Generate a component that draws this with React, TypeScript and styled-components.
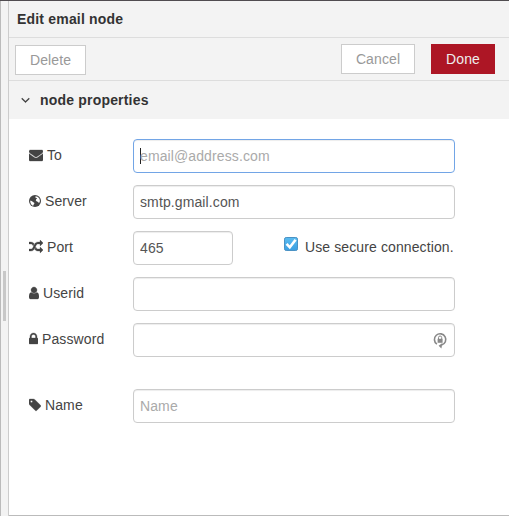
import React from "react";
import styled, { createGlobalStyle } from "styled-components";

const GlobalStyle = createGlobalStyle`
  * { box-sizing: border-box; }
  body {
    margin: 0;
    overflow: hidden;
    background: #fff;
    color: #444;
    font: 14px/20px "Liberation Sans", Arial, Helvetica, sans-serif;
    letter-spacing: 0.11px;
  }
`;

const Tray = styled.div`
  display: grid;
  grid-template-columns: 9px 1fr;
  width: 509px;
  height: 516px;
  border-top: 1px solid #504c50;
`;

const ResizeBar = styled.div`
  display: flex;
  align-items: flex-start;
  padding: 270px 0 0 2px;
  background: #f3f3f3;
  border-left: 1px solid #bbb;
  border-right: 1px solid #ccc;
`;

const Grip = styled.div`
  width: 3px;
  height: 50px;
  background: #c8c8c8;
`;

const Panel = styled.main`
  display: flex;
  flex-direction: column;
  border-bottom: 1px solid #bbb;
`;

const Header = styled.header`
  height: 37px;
  padding: 8px 8px 0;
  background: #f3f3f3;
  border-bottom: 1px solid #ddd;
  color: #333;
  font-weight: bold;
  letter-spacing: 0.19px;
`;

const Toolbar = styled.div`
  display: flex;
  align-items: flex-start;
  height: 43px;
  padding: 6px 14px 0 6px;
  background: #f3f3f3;
  border-bottom: 1px solid #ddd;
`;

const Actions = styled.div`
  display: flex;
  gap: 16px;
  margin-left: auto;
`;

const Button = styled.button<{ $primary?: boolean; $width: number; $drop?: number }>`
  width: ${(p) => p.$width}px;
  height: 30px;
  margin: ${(p) => p.$drop ?? 0}px 0 0;
  padding: 0;
  border: 1px solid ${(p) => (p.$primary ? "#ad1625" : "#ccc")};
  background: ${(p) => (p.$primary ? "#ad1625" : "#fff")};
  color: ${(p) => (p.$primary ? "#eee" : "#999")};
  font: inherit;
  letter-spacing: inherit;
  line-height: 28px;
`;

const SectionHeader = styled.div`
  display: flex;
  align-items: center;
  gap: 10px;
  height: 38px;
  padding-left: 12px;
  background: #f3f3f3;
  color: #333;
  font-weight: bold;
  letter-spacing: 0.19px;
`;

const Form = styled.form`
  display: flex;
  flex-direction: column;
  gap: 12px;
  padding: 20px 0 0 20px;
`;

const Row = styled.div<{ $spaced?: boolean }>`
  display: flex;
  height: 34px;
  margin-top: ${(p) => (p.$spaced ? 20 : 0)}px;
`;

const Label = styled.label`
  display: flex;
  align-items: center;
  gap: 4px;
  width: 104px;
  height: 32px;
`;

const Glyph = styled.svg`
  display: block;
  flex: none;
  fill: currentColor;
`;

const Field = styled.div<{ $width?: number; $focused?: boolean }>`
  display: flex;
  align-items: center;
  width: ${(p) => p.$width ?? 322}px;
  height: 34px;
  padding: 0 6px;
  border: 1px solid ${(p) => (p.$focused ? "#72a5e6" : "#ccc")};
  border-radius: 4px;
  background: #fff;
  box-shadow: inset 0 1px 1px rgba(0, 0, 0, 0.075);
`;

const Input = styled.input`
  flex: 1;
  min-width: 0;
  height: 20px;
  padding: 0;
  border: 0;
  outline: 0;
  background: transparent;
  color: #555;
  font: inherit;
  letter-spacing: inherit;
  line-height: 20px;
  &::placeholder { color: #aaa; opacity: 1; }
`;

const Caret = styled.span`
  width: 1px;
  height: 16px;
  margin-right: -1px;
  background: #222;
`;

const Secure = styled.label`
  display: flex;
  align-items: flex-start;
  gap: 7px;
  margin-left: 51px;
  padding-top: 6px;
`;

const icons = {
  to: { box: "0 0 1792 1792", w: 14, d: "M1792 710v794q0 66-47 113t-113 47h-1472q-66 0-113-47t-47-113v-794q44 49 101 87 362 246 497 345 57 42 92.5 65.5t94.5 48 110 24.5h2q51 0 110-24.5t94.5-48 92.5-65.5q170-123 498-345 57-39 100-87zm0-294q0 79-49 151t-122 123q-376 261-468 325-10 7-42.5 31t-54 38.5-52 32.5-57.5 27-50 9h-2q-23 0-50-9t-57.5-27-52-32.5-54-38.5-42.5-31q-91-64-262-182.5t-205-142.5q-62-42-117-115.5t-55-136.5q0-78 41.5-130t118.5-52h1472q65 0 112.5 47t47.5 113z" },
  port: { box: "0 0 1792 1792", w: 14, d: "M666 481q-60 92-137 273-22-45-37-72.5t-40.5-63.5-51-56.5-63-35-81.5-14.5h-224q-14 0-23-9t-9-23v-192q0-14 9-23t23-9h224q250 0 410 225zm1126 799q0 14-9 23l-320 320q-9 9-23 9-13 0-22.5-9.5t-9.5-22.5v-192q-32 0-85 .5t-81 1-73-1-71-5-64-10.5-63-18.5-58-28.5-59-40-55-53.5-56-69.5q59-93 136-273 22 45 37 72.5t40.5 63.5 51 56.5 63 35 81.5 14.5h256v-192q0-14 9-23t23-9q12 0 24 10l319 319q9 9 9 23zm0-896q0 14-9 23l-320 320q-9 9-23 9-13 0-22.5-9.5t-9.5-22.5v-192h-256q-48 0-87 15t-69 45-51 61.5-45 77.5q-32 62-78 171-29 66-49.5 111t-54 105-64 100-74 83-90 68.5-106.5 42-128 16.5h-224q-14 0-23-9t-9-23v-192q0-14 9-23t23-9h224q48 0 87-15t69-45 51-61.5 45-77.5q32-62 78-171 29-66 49.5-111t54-105 64-100 74-83 90-68.5 106.5-42 128-16.5h256v-192q0-14 9-23t23-9q12 0 24 10l319 319q9 9 9 23z" },
  user: { box: "256 0 1280 1792", w: 10, d: "M1536 1399q0 109-62.5 187t-150.5 78h-854q-88 0-150.5-78t-62.5-187q0-85 8.5-160.5t31.5-152 58.5-131 94-89 134.5-34.5q131 128 313 128t313-128q76 0 134.5 34.5t94 89 58.5 131 31.5 152 8.5 160.5zm-256-887q0 159-112.5 271.5t-271.5 112.5-271.5-112.5-112.5-271.5 112.5-271.5 271.5-112.5 271.5 112.5 112.5 271.5z" },
  lock: { box: "320 0 1152 1792", w: 9, d: "M640 768h512v-192q0-106-75-181t-181-75-181 75-75 181v192zm832 96v576q0 40-28 68t-68 28h-960q-40 0-68-28t-28-68v-576q0-40 28-68t68-28h32v-192q0-184 132-316t316-132 316 132 132 316v192h32q40 0 68 28t28 68z" },
  tag: { box: "128 0 1536 1792", w: 12, d: "M576 448q0-53-37.5-90.5t-90.5-37.5-90.5 37.5-37.5 90.5 37.5 90.5 90.5 37.5 90.5-37.5 37.5-90.5zm1067 576q0 53-37 90l-491 492q-39 37-91 37-53 0-90-37l-715-716q-38-37-64.5-101t-26.5-117v-416q0-52 38-90t90-38h416q53 0 117 26.5t102 64.5l715 714q37 39 37 91z" },
  down: { box: "320 0 1152 1792", w: 9, d: "M1395 736q0 13-10 23l-466 466q-10 10-23 10t-23-10l-466-466q-10-10-10-23t10-23l50-50q10-10 23-10t23 10l393 393 393-393q10-10 23-10t23 10l50 50q10 10 10 23z" },
};

const Icon = ({ name }: { name: keyof typeof icons }) => (
  <Glyph viewBox={icons[name].box} width={icons[name].w} height={14}>
    <path d={icons[name].d} stroke="currentColor" strokeWidth="40" />
  </Glyph>
);

const Globe = () => (
  <Glyph viewBox="0 0 12 14" width={12} height={14}>
    <circle cx="6" cy="7" r="6" />
    <path fill="#fff" d="M6.6 2.2 8.6 2.7 10.2 4.2 10.9 6.2 10.7 8 9.8 9.3 9.3 7.9 7.9 7.6 6.8 6.6 7.1 5.2 8.2 4.6 7.4 3.9 6.3 3.6zM1.5 6.6 3 7.3 4.4 8.2 5.5 9 5.1 10.1 4.3 11 4.2 11.9 2.7 10.9 1.6 9.3 1.2 7.6z" />
  </Glyph>
);

const CheckBox = () => (
  <Glyph viewBox="0 0 14 14" width={14} height={14}>
    <defs>
      <linearGradient id="checked" x1="0" y1="0" x2="0" y2="1">
        <stop stopColor="#5bbcf0" />
        <stop offset="1" stopColor="#3b9fe2" />
      </linearGradient>
    </defs>
    <rect x=".5" y=".5" width="13" height="13" rx="1.7" fill="url(#checked)" stroke="#4a92c4" />
    <path d="m2.6 6.8 3.2 3.5L11.6 2.8" fill="none" stroke="#fff" strokeWidth="2.6" />
  </Glyph>
);

const PasswordKey = () => (
  <Glyph viewBox="0 0 15 17" width={15} height={17}>
    <path d="M3.9 12.2A5.7 5.7 0 1 1 8.6 13" fill="none" stroke="#888" strokeWidth="1.6" />
    <path d="M9.4 11 5.6 13.7 8.4 16.6z" fill="#888" />
    <path d="M4.6 6.8h5v4h-5z" fill="#888" />
    <path d="M5.5 7V5.6a1.6 1.6 0 0 1 3.2 0V7" fill="none" stroke="#888" />
  </Glyph>
);

export default function App() {
  return (
    <>
      <GlobalStyle />
      <Tray>
        <ResizeBar><Grip /></ResizeBar>
        <Panel>
          <Header>Edit email node</Header>
          <Toolbar>
            <Button $width={71} $drop={1}>Delete</Button>
            <Actions>
              <Button $width={74}>Cancel</Button>
              <Button $width={64} $primary>Done</Button>
            </Actions>
          </Toolbar>
          <SectionHeader><Icon name="down" />node properties</SectionHeader>
          <Form>
            <Row>
              <Label htmlFor="to"><Icon name="to" />To</Label>
              <Field $focused><Caret /><Input id="to" placeholder="email@address.com" /></Field>
            </Row>
            <Row>
              <Label htmlFor="server"><Globe />Server</Label>
              <Field><Input id="server" defaultValue="smtp.gmail.com" /></Field>
            </Row>
            <Row>
              <Label htmlFor="port"><Icon name="port" />Port</Label>
              <Field $width={100}><Input id="port" defaultValue="465" /></Field>
              <Secure><CheckBox />Use secure connection.</Secure>
            </Row>
            <Row>
              <Label htmlFor="userid"><Icon name="user" />Userid</Label>
              <Field><Input id="userid" /></Field>
            </Row>
            <Row>
              <Label htmlFor="password"><Icon name="lock" />Password</Label>
              <Field><Input id="password" type="password" /><PasswordKey /></Field>
            </Row>
            <Row $spaced>
              <Label htmlFor="name"><Icon name="tag" />Name</Label>
              <Field><Input id="name" placeholder="Name" /></Field>
            </Row>
          </Form>
        </Panel>
      </Tray>
    </>
  );
}
